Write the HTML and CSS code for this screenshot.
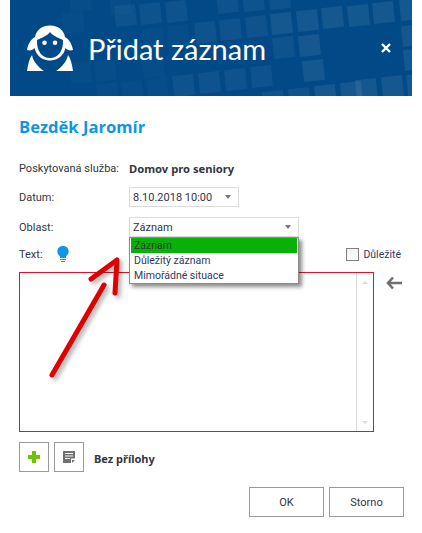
FILE: index.html
```html
<!DOCTYPE html>
<html lang="cs">
<head>
<meta charset="utf-8">
<title>Přidat záznam</title>
<link rel="stylesheet" href="styles.css">
</head>
<body>
<div class="dialog">
  <header class="head">
    <svg class="pattern" viewBox="0 0 402 96" width="402" height="96" aria-hidden="true">
      <g class="sq-faint">
        <rect x="53" y="12" width="21" height="21"/><rect x="60" y="62" width="21" height="21"/><rect x="85" y="60" width="21" height="21"/>
        <rect x="87" y="83" width="21" height="21"/><rect x="112" y="81" width="21" height="21"/><rect x="137" y="78" width="21" height="21"/>
        <rect x="133" y="57" width="21" height="21"/><rect x="133" y="28" width="21" height="21"/><rect x="158" y="25" width="21" height="21"/>
        <rect x="60" y="-10" width="21" height="21"/><rect x="100" y="-6" width="21" height="21"/>
      </g>
      <g class="sq-mid">
        <rect x="105" y="5" width="21" height="21"/><rect x="130" y="3" width="21" height="21"/><rect x="156" y="1" width="21" height="21"/>
        <rect x="185" y="22" width="21" height="21"/><rect x="210" y="19" width="21" height="21"/><rect x="236" y="16" width="21" height="21"/>
        <rect x="163" y="75" width="21" height="21"/><rect x="189" y="72" width="21" height="21"/><rect x="215" y="69" width="21" height="21"/><rect x="241" y="66" width="21" height="21"/>
        <rect x="207" y="-8" width="21" height="21"/><rect x="233" y="-10" width="21" height="21"/><rect x="259" y="-12" width="21" height="21"/>
        <rect x="263" y="37" width="21" height="21"/>
        <rect x="253" y="91" width="21" height="21"/><rect x="279" y="88" width="21" height="21"/>
      </g>
      <g class="sq-bright">
        <rect x="261" y="13" width="21" height="21"/><rect x="287" y="10" width="21" height="21"/><rect x="312" y="7" width="21" height="21"/>
        <rect x="338" y="5" width="21" height="21"/><rect x="363" y="2" width="21" height="21"/><rect x="390" y="-1" width="21" height="21"/>
        <rect x="289" y="35" width="21" height="21"/><rect x="293" y="60" width="21" height="21"/>
        <rect x="392" y="25" width="21" height="21"/><rect x="394" y="49" width="21" height="21"/>
        <rect x="305" y="85" width="21" height="21"/><rect x="331" y="82" width="21" height="21"/><rect x="346" y="79" width="21" height="21"/>
        <rect x="372" y="76" width="21" height="21"/><rect x="397" y="74" width="21" height="21"/>
      </g>
    </svg>
    <svg class="logo" viewBox="0 0 46 46" width="46" height="46" aria-hidden="true">
      <path class="logo-w" d="M23 .5C14 .5 9 6 8 12 4 14 1 19 0 25c3 1 6 0 7.500-2C9 30 15 35.500 23 35.500S37 30 38.500 23c1.500 2 4.500 3 7.500 2-1-6-4-11-8-13C37 6 32 .5 23 .5Z"/>
      <path class="logo-b" d="M23 7c-3 4-9 6-13 8-.5 11 5 18 13 18s13.500-7 13-18c-4-2-10-4-13-8Z"/>
      <circle class="logo-w" cx="17.500" cy="17.700" r="2.300"/>
      <circle class="logo-w" cx="28" cy="17.700" r="2.300"/>
      <path class="logo-w" d="M0 46C1 40 2 34 5 30c1 6 6 12 12 16ZM46 46c-1-6-2-12-5-16-1 6-6 12-12 16Z"/>
    </svg>
    <h1 class="title">Přidat záznam</h1>
    <svg class="close" viewBox="0 0 10 10" width="10" height="10" aria-hidden="true"><path d="M1 1l8 8M9 1l-8 8"/></svg>
  </header>

  <main class="form">
    <h2 class="name">Bezděk Jaromír</h2>
    <div class="row row-service"><span class="label">Poskytovaná služba:</span><strong class="value">Domov pro seniory</strong></div>
    <div class="row row-date">
      <span class="label">Datum:</span>
      <div class="select select-date"><span>8.10.2018 10:00</span><i class="caret"></i></div>
    </div>
    <div class="row row-area">
      <span class="label">Oblast:</span>
      <div class="select select-area"><span>Záznam</span><i class="caret"></i>
        <ul class="menu">
          <li class="menu-on">Záznam</li>
          <li>Důležitý záznam</li>
          <li>Mimořádné situace</li>
        </ul>
      </div>
    </div>
    <div class="row row-text">
      <span class="label label-text">Text:</span>
      <svg class="bulb" viewBox="0 0 12 17" width="12" height="17" aria-hidden="true">
        <path d="M6 0a5.500 5.500 0 0 0-3 10.200V12h6v-1.800A5.500 5.500 0 0 0 6 0Z"/>
        <path d="M3 13h6v1H3zM4 15h4v1H4z"/>
      </svg>
      <label class="check"><i class="box"></i>Důležité</label>
    </div>
    <div class="editor-row">
      <div class="editor">
        <div class="scroll"><i class="sc-up"></i><i class="sc-down"></i></div>
      </div>
      <svg class="back" viewBox="0 0 16 14" width="16" height="14" aria-hidden="true">
        <path d="M7 1.500 2 7l5 5.500M2.500 7H16"/>
      </svg>
    </div>
    <div class="attach">
      <button class="icon-btn" type="button">
        <svg viewBox="0 0 12 12" width="12" height="12" aria-hidden="true"><path class="plus" d="M4 0h4v4h4v4H8v4H4V8H0V4h4Z"/></svg>
      </button>
      <button class="icon-btn" type="button">
        <svg viewBox="0 0 12 12" width="12" height="12" aria-hidden="true"><path class="note" d="M0 0h12v7.500H8V12H0Zm2 2v1h8V2Zm0 2.500v1h8v-1Zm0 2.500v1h5V7Zm7 2h3l-3 3Z"/></svg>
      </button>
      <strong class="attach-text">Bez přílohy</strong>
    </div>
    <div class="actions">
      <button class="btn" type="button">OK</button>
      <button class="btn" type="button">Storno</button>
    </div>
  </main>
</div>
<svg class="annot" viewBox="0 0 422 533" width="422" height="533" aria-hidden="true">
  <path class="annot-shadow" d="M52 375 104 285M91 279 117 260 115 293"/>
  <path class="annot-line" d="M52 375 104 285M91 279 117 260 115 293"/>
</svg>
</body>
</html>
```
FILE: styles.css
```css
* { box-sizing: border-box; }
html, body { margin: 0; padding: 0; background: #fff; }
body {
  position: relative;
  width: 422px;
  height: 533px;
  overflow: hidden;
  font-family: Roboto, "Noto Sans", sans-serif;
  font-size: 11px;
  color: #33363f;
}
.dialog { width: 422px; }
.head {
  position: relative;
  margin: 0 10px;
  height: 96px;
  background: #024a87;
  display: flex;
  align-items: center;
  padding: 0 0 0 17px;
  overflow: hidden;
  color: #fff;
}
.pattern { position: absolute; left: 0; top: 0; }
.pattern rect { transform-box: fill-box; transform-origin: center; transform: rotate(-6deg); }
.sq-faint rect { fill: #fff; fill-opacity: .02; }
.sq-mid rect { fill: #fff; fill-opacity: .05; }
.sq-bright rect { fill: #fff; fill-opacity: .08; }
.logo { position: relative; flex: none; }
.logo-w { fill: #fff; }
.logo-b { fill: #024a87; }
.title {
  position: relative;
  margin: 0 0 0 15px;
  font: 400 29px/1 Lato, sans-serif;
}
.close {
  position: absolute;
  left: 371px;
  top: 43px;
  fill: none;
  stroke: #fff;
  stroke-width: 2.400;
}
.form { padding: 0 18px 0 19px; }
.name {
  margin: 0;
  padding-top: 21px;
  height: 54px;
  font: 700 16.600px/20px "Open Sans", sans-serif;
  color: #0d96e6;
}
.row { display: flex; align-items: center; }
.label { flex: none; width: 110px; }
.value { font: 700 11.200px "Noto Sans", sans-serif; }
.row-service { height: 18px; margin-top: 9px; }
.row-date { height: 20px; margin-top: 10px; }
.row-area { height: 20px; margin-top: 10px; }
.select {
  position: relative;
  height: 20px;
  border: 1px solid #dcdcdc;
  padding: 0 3px;
  display: flex;
  align-items: center;
  justify-content: space-between;
  background: #fff;
}
.select-date { width: 110px; }
.select-area { width: 170px; z-index: 2; }
.caret {
  width: 0; height: 0;
  margin-right: 4px;
  border: 3.500px solid transparent;
  border-top: 4px solid #777;
  border-bottom: 0;
}
.menu {
  position: absolute;
  left: -1px;
  top: 19px;
  width: 170px;
  margin: 0;
  padding: 0 1px;
  list-style: none;
  background: #fff;
  border: 1px solid #8c8c8c;
  box-shadow: 3px 3px 4px rgba(0, 0, 0, .45);
  font-size: 10.500px;
}
.menu li { height: 15px; line-height: 15px; padding-left: 3px; color: #2f3a66; }
.menu .menu-on { background: #07b107; color: #333; }
.row-text { height: 17px; margin-top: 9px; position: relative; }
.label-text { width: 38px; }
.bulb { flex: none; fill: #0d96e6; }
.check { margin-left: auto; margin-right: 3px; display: flex; align-items: center; gap: 4px; color: #2f3a66; font-size: 10.500px; }
.box {
  width: 13px; height: 13px;
  border: 1px solid #808080;
  background: linear-gradient(#f2f2f2, #fff);
}
.editor-row { display: flex; align-items: flex-start; margin-top: 9px; }
.editor {
  position: relative;
  width: 355px;
  height: 160px;
  border: 1px solid #e0122f;
  display: flex;
  justify-content: flex-end;
}
.scroll {
  width: 17px;
  border-left: 1px solid #d8d8d8;
  display: flex;
  flex-direction: column;
  justify-content: space-between;
  align-items: center;
  padding: 8px 0 7px;
}
.sc-up, .sc-down { width: 0; height: 0; border: 3px solid transparent; }
.sc-up { border-bottom: 3px solid #dcdcdc; border-top: 0; }
.sc-down { border-top: 3px solid #dcdcdc; border-bottom: 0; }
.back { flex: none; margin: 4px 0 0 12px; fill: none; stroke: #707070; stroke-width: 2.600; }
.attach { display: flex; align-items: center; margin-top: 10px; gap: 5px; height: 30px; }
.icon-btn {
  width: 30px; height: 30px; padding: 0;
  border: 1px solid #999;
  background: #fff;
  display: flex; align-items: center; justify-content: center;
}
.plus { fill: #6fc400; }
.note { fill: #707070; fill-rule: evenodd; }
.attach-text { margin-left: 5px; padding-top: 2px; font: 700 11px "Noto Sans", sans-serif; }
.actions { display: flex; justify-content: flex-end; gap: 5px; margin-top: 15px; }
.btn {
  width: 75px; height: 30px;
  border: 1px solid #999;
  background: #fff;
  font: inherit;
  color: inherit;
}
.annot { position: absolute; left: 0; top: 0; pointer-events: none; z-index: 5; }
.annot-line, .annot-shadow { fill: none; stroke-linecap: round; stroke-linejoin: round; stroke-width: 5px; }
.annot-line { stroke: #e00000; }
.annot-shadow { stroke: #000; stroke-opacity: .3; transform: translate(3px, 3px); filter: blur(2px); }
```
